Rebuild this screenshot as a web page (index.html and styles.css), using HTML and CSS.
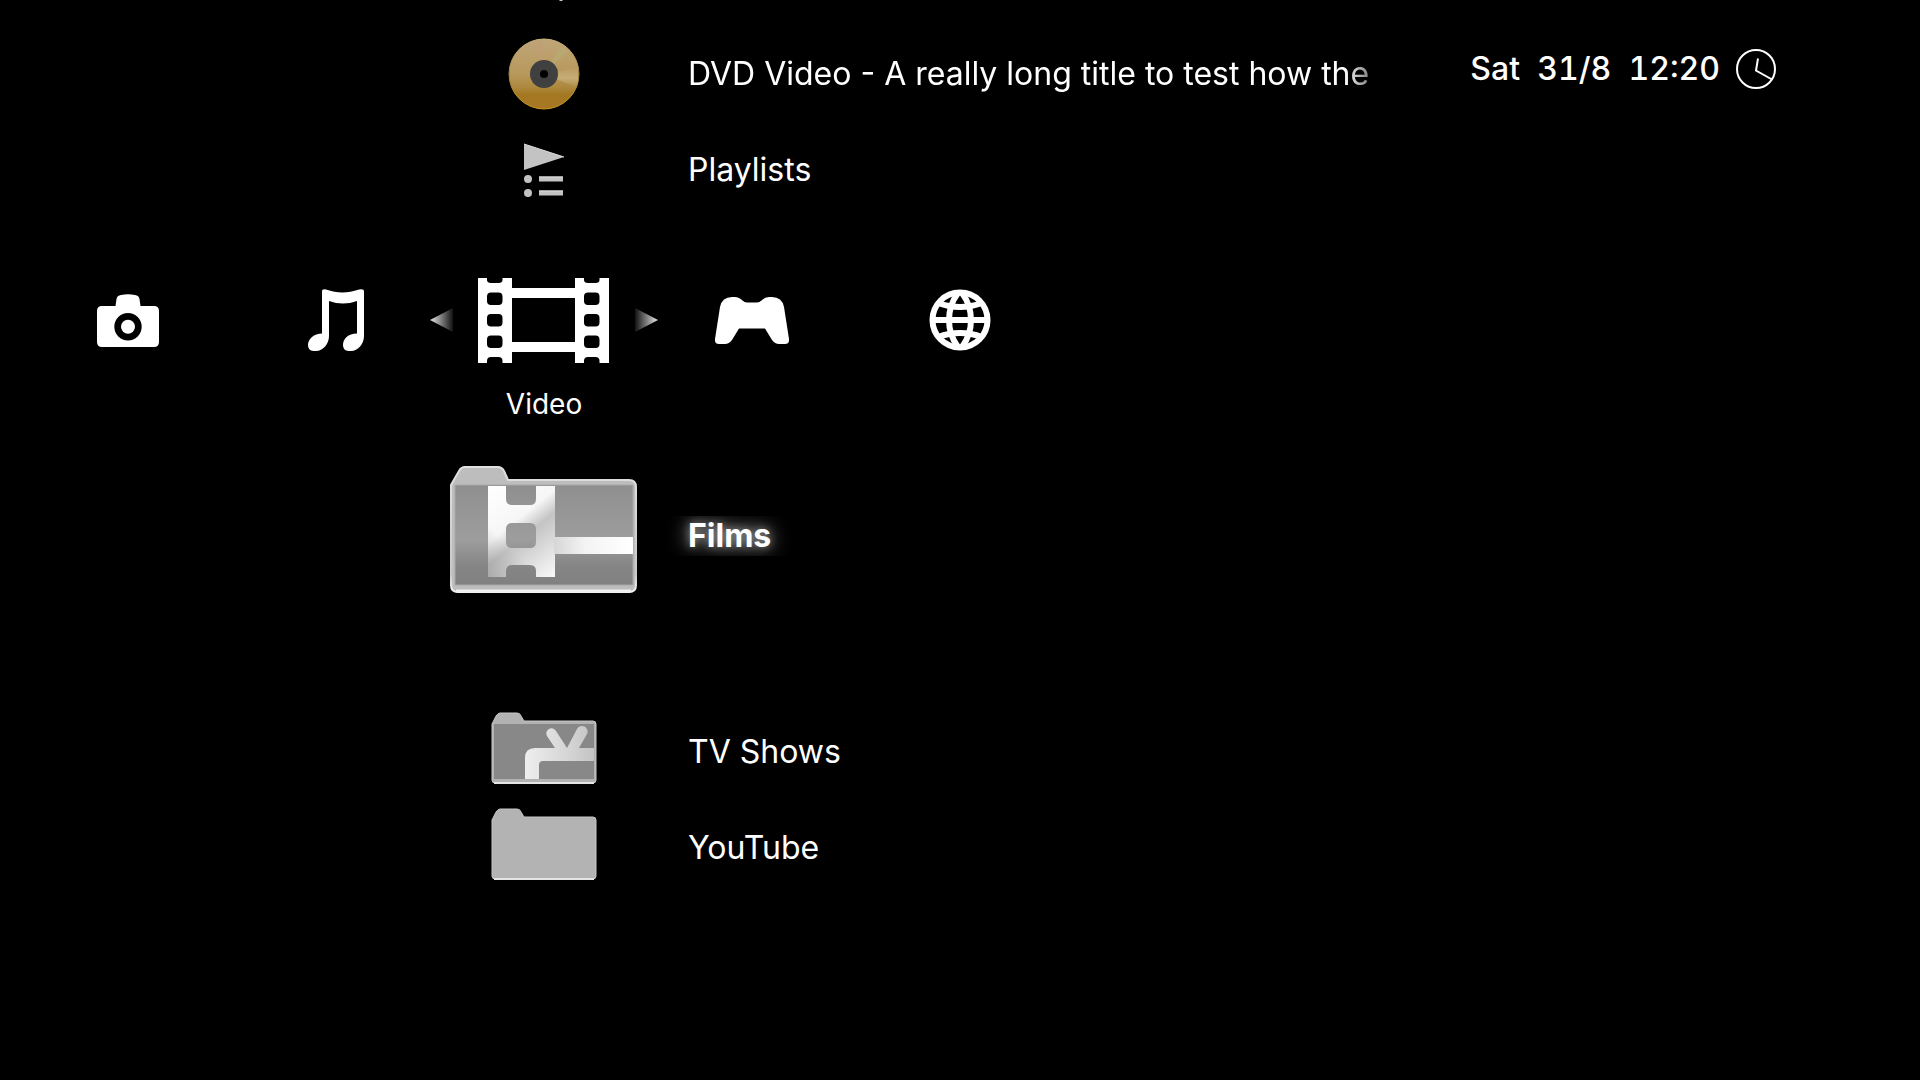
FILE: index.html
```html
<!DOCTYPE html>
<html lang="en">
<head>
<meta charset="utf-8">
<title>Media menu</title>
<link rel="stylesheet" href="styles.css">
</head>
<body>
<main class="menu">
  <div class="top">
    <ul class="list">
      <li class="item item-leaving">
        <svg width="96" height="26" viewBox="0 0 96 26" aria-hidden="true"><path d="M63 0h4l-1 1h-2z" fill="#c8c8c8"/></svg>
      </li>
      <li>
        <button class="item" type="button">
          <svg class="icon" width="72" height="72" viewBox="0 0 72 72" aria-hidden="true">
            <defs>
              <linearGradient id="gold" x1="0" y1="0" x2="0" y2="1"><stop offset="0" stop-color="#bfa579"/><stop offset=".5" stop-color="#b8995c"/><stop offset=".68" stop-color="#ad893f"/><stop offset=".8" stop-color="#a37822"/><stop offset="1" stop-color="#a87724"/></linearGradient>
              <linearGradient id="rim" x1="0" y1="0" x2="0" y2="1"><stop offset="0" stop-color="#d0b880"/><stop offset=".5" stop-color="#9c8248"/><stop offset="1" stop-color="#d09a20"/></linearGradient>
              <linearGradient id="shine" x1="0" y1="0" x2="0" y2="1"><stop offset="0" stop-color="#d8c79a" stop-opacity="0"/><stop offset=".5" stop-color="#d8c79a" stop-opacity=".5"/><stop offset="1" stop-color="#d8c79a" stop-opacity="0"/></linearGradient>
            </defs>
            <circle cx="36" cy="36" r="35" fill="url(#gold)" stroke="url(#rim)"/>
            <path d="M36 36L70 30V50Z" fill="url(#shine)"/>
            <path d="M36 36L53 8L60 13Z" fill="#b4b478" opacity=".4"/>
            <path d="M36 36L25 4L34 2Z" fill="#c49a7c" opacity=".3"/>
            <circle cx="36" cy="36" r="14" fill="#404040"/>
            <circle cx="36" cy="36" r="4" fill="#000"/>
          </svg>
          <span class="title title-long">DVD Video - A really long title to test how the</span>
        </button>
      </li>
      <li>
        <button class="item" type="button">
          <svg class="icon" width="42" height="54" viewBox="0 0 42 54" aria-hidden="true">
            <g fill="#c3c3c3"><path d="M1 1L41 14L1 27Z"/><circle cx="5" cy="36" r="4"/><circle cx="5" cy="50" r="4"/><path d="M16 33.500h24v5H16zM16 47.500h24v5H16z"/></g>
            <path d="M1 1L41 14M16 34h24M16 48h24" stroke="#dedede" fill="none"/>
          </svg>
          <span class="title">Playlists</span>
        </button>
      </li>
    </ul>
    <div class="clock">
      <time class="time" datetime="2024-08-31T12:20">Sat&nbsp; 31/8&nbsp; 12:20</time>
      <svg width="40" height="40" viewBox="0 0 40 40" aria-hidden="true"><g fill="none" stroke="#fff" stroke-width="2"><circle cx="20" cy="20" r="19"/><path d="M22 9.500L20 21.500L36 30.500"/></g></svg>
    </div>
  </div>

  <nav class="categories" aria-label="Categories">
    <button class="category" type="button" aria-label="Photo">
      <svg width="62" height="53" viewBox="0 0 62 53" aria-hidden="true"><path fill="#fff" fill-rule="evenodd" d="M18.500 12L19.500 5Q20 1.500 24 1Q31 -.3 38 1Q42 1.500 42.500 5L43.500 12H57Q62 12 62 17V48Q62 53 57 53H5Q0 53 0 48V17Q0 12 5 12ZM31 19A13.700 13.700 0 1 0 31 46.400A13.700 13.700 0 1 0 31 19Z"/><circle cx="31" cy="32.700" r="7" fill="#fff"/></svg>
    </button>
    <button class="category" type="button" aria-label="Music">
      <svg width="56" height="62" viewBox="0 0 56 62" aria-hidden="true"><path fill="#fff" d="M14 2Q14 -.5 18 .4C24 2 29 3.500 34.500 3.500S45 2 51 .4Q56 -.6 56 2.500V47C56 55 50 62 43 62H40.500C37 62 35 59 35 56C35 50 40 44.500 49 44.500V12Q35 17 21 12V47C21 55 15 62 8 62H5.500C2 62 0 59 0 56C0 50 6 44.500 14 44.500Z"/></svg>
    </button>
    <button class="category category-current" type="button" aria-current="true">
      <svg width="24" height="24" viewBox="0 0 24 24" aria-hidden="true"><defs><linearGradient id="arrowL"><stop offset="0" stop-color="#e8e8e8"/><stop offset="1" stop-color="#111"/></linearGradient></defs><path d="M0 12L23 0V24Z" fill="url(#arrowL)"/></svg>
      <svg width="132" height="86" viewBox="0 0 132 86" aria-hidden="true">
        <defs><g id="reel"><path fill="#fff" fill-rule="evenodd" d="M0 1H9V3Q9 6 13 6H20.500Q24.500 6 24.500 3V1H34V86H24.500V84Q24.500 80 20.500 80H13Q9 80 9 84V86H0ZM13 15.500Q9 15.500 9 19.500V24Q9 28 13 28H20.500Q24.500 28 24.500 24V19.500Q24.500 15.500 20.500 15.500ZM13 37Q9 37 9 41V45.500Q9 49.500 13 49.500H20.500Q24.500 49.500 24.500 45.500V41Q24.500 37 20.500 37ZM13 58.500Q9 58.500 9 62.500V67Q9 71 13 71H20.500Q24.500 71 24.500 67V62.500Q24.500 58.500 20.500 58.500Z"/></g></defs>
        <use href="#reel"/><use href="#reel" x="97"/><path fill="#fff" d="M33 11h65v10H33zM33 65h65v10H33z"/>
      </svg>
      <svg width="24" height="24" viewBox="0 0 24 24" aria-hidden="true"><defs><linearGradient id="arrowR"><stop offset="0" stop-color="#111"/><stop offset="1" stop-color="#e8e8e8"/></linearGradient></defs><path d="M24 12L1 0V24Z" fill="url(#arrowR)"/></svg>
      <span class="category-name">Video</span>
    </button>
    <button class="category" type="button" aria-label="Game">
      <svg width="74" height="47" viewBox="0 0 74 47" aria-hidden="true"><path fill="#fff" d="M5 10Q7 0 17 0H20Q24 0 27.500 3.500Q29.500 5.500 32 5.500H42Q44.500 5.500 46.500 3.500Q50 0 54 0H57Q67 0 69 10L74 42Q74.500 47 70 47H64Q60 47 57 43L50 31.500H24L17 43Q14 47 10 47H4Q-.5 47 0 42Z"/></svg>
    </button>
    <button class="category" type="button" aria-label="Network">
      <svg width="62" height="62" viewBox="0 0 62 62" aria-hidden="true"><g fill="none" stroke="#fff" stroke-width="6"><circle cx="31" cy="31" r="27.500"/><path d="M3 31H59M9 14Q31 22 53 14M9 48Q31 40 53 48"/><path d="M29 4C17 20 17 42 29 58M33 4C45 20 45 42 33 58"/></g></svg>
    </button>
  </nav>

  <ul class="list">
    <li>
      <button class="item item-current" type="button" aria-current="true">
        <svg class="icon" width="188" height="142" viewBox="0 0 188 142" aria-hidden="true">
          <defs>
            <linearGradient id="panel" x1="0" y1="0" x2="0" y2="1"><stop offset="0" stop-color="#8f8f8f"/><stop offset=".55" stop-color="#9d9d9d"/><stop offset=".8" stop-color="#868686"/><stop offset="1" stop-color="#808080"/></linearGradient>
            <linearGradient id="strip" gradientUnits="userSpaceOnUse" x1="38" y1="21" x2="107" y2="108"><stop offset="0" stop-color="#fff"/><stop offset=".4" stop-color="#f6f6f6"/><stop offset=".56" stop-color="#c4c4c4"/><stop offset="1" stop-color="#f8f8f8"/></linearGradient>
            <linearGradient id="stripFade" gradientUnits="userSpaceOnUse" x1="64" y1="86" x2="38" y2="112"><stop offset="0" stop-color="#888" stop-opacity="0"/><stop offset="1" stop-color="#888" stop-opacity=".5"/></linearGradient>
            <linearGradient id="band" x1="0" y1="0" x2="1" y2="0"><stop offset="0" stop-color="#d6d6d6"/><stop offset=".4" stop-color="#f4f4f4"/><stop offset="1" stop-color="#fff"/></linearGradient>
            <linearGradient id="edge" x1="0" y1="0" x2="0" y2="1"><stop offset="0" stop-color="#e0e0e0"/><stop offset=".85" stop-color="#c8c8c8"/><stop offset="1" stop-color="#f4f4f4"/></linearGradient>
            <path id="film" d="M38 21H56V34Q56 40 62 40H80Q86 40 86 34V21H105V112H86V106Q86 100 80 100H62Q56 100 56 106V112H38ZM62 58Q56 58 56 64V77Q56 83 62 83H80Q86 83 86 77V64Q86 58 80 58Z" fill-rule="evenodd"/>
          </defs>
          <path d="M1 20L9 6Q11 2 15 2H48Q52 2 54 6L58 15H179Q186 15 186 22V120Q186 127 179 127H8Q1 127 1 120Z" fill="#bdbdbd" stroke="url(#edge)" stroke-width="2"/>
          <path d="M6 126H181" stroke="#f0f0f0" stroke-width="3"/>
          <path d="M5 20H183V120H5Z" fill="url(#panel)" stroke="#a8a8a8"/>
          <use href="#film" fill="url(#strip)"/>
          <use href="#film" fill="url(#stripFade)"/>
          <path d="M104 72H183V89H104Z" fill="url(#band)"/>
        </svg>
        <span class="title">Films</span>
      </button>
    </li>
    <li>
      <button class="item" type="button">
        <svg class="icon" width="106" height="80" viewBox="0 0 106 80" aria-hidden="true">
          <defs>
            <linearGradient id="tv" x1="0" y1="0" x2="1" y2="0"><stop offset="0" stop-color="#eee"/><stop offset=".6" stop-color="#d6d6d6"/><stop offset="1" stop-color="#c4c4c4"/></linearGradient>
          </defs>
          <path d="M1 12L5 4Q7 1 9 1H26Q29 1 30 4L33 9H102Q105 9 105 12V68Q105 71 102 71H4Q1 71 1 68Z" fill="#b2b2b2" stroke="#c6c6c6"/>
          <path d="M3 71H103" stroke="#e4e4e4" stroke-width="2"/>
          <path d="M3 12H103V67H3Z" fill="#888"/>
          <path d="M34 67V46Q34 36 44 36H64L56 24A5 5 0 0 1 65 19L76 36L86 17A5 5 0 0 1 96 22L88 36H103V49H52Q48 49 48 53V67Z" fill="url(#tv)"/>
        </svg>
        <span class="title">TV Shows</span>
      </button>
    </li>
    <li>
      <button class="item" type="button">
        <svg class="icon" width="106" height="80" viewBox="0 0 106 80" aria-hidden="true">
          <path d="M1 12L5 4Q7 1 9 1H26Q29 1 30 4L33 9H102Q105 9 105 12V68Q105 71 102 71H4Q1 71 1 68Z" fill="#b3b3b3" stroke="#c6c6c6"/>
          <path d="M3 71H103" stroke="#e4e4e4" stroke-width="2"/>
        </svg>
        <span class="title">YouTube</span>
      </button>
    </li>
  </ul>
</main>
</body>
</html>
```
FILE: styles.css
```css
* {
  box-sizing: border-box;
}

body {
  margin: 0;
  background: #000;
  color: #fff;
  font-family: Inter, sans-serif;
  font-size: 32px;
  line-height: 40px;
}

button {
  padding: 0;
  border: 0;
  background: none;
  color: inherit;
  font: inherit;
  text-align: left;
  cursor: pointer;
}

svg {
  display: block;
  flex: none;
}

.menu {
  min-height: 100vh;
}

.top {
  display: flex;
  justify-content: space-between;
  align-items: flex-start;
}

.list {
  margin: 0;
  padding: 0 0 0 448px;
  list-style: none;
}

.item {
  display: grid;
  grid-template-columns: 192px auto;
  column-gap: 48px;
  align-items: center;
  justify-items: start;
  height: 96px;
}

.item-leaving {
  height: 26px;
}

.item > svg {
  justify-self: center;
}

.item-current {
  height: 176px;
  margin-bottom: 80px;
}

.title {
  font-weight: 425;
  white-space: nowrap;
}

.title-long {
  mask-image: linear-gradient(to left, rgb(0 0 0 / 50%), #000 24px);
}

.item-current .title {
  font-weight: 700;
  text-shadow: 0 0 8px rgb(255 255 255 / 40%), 0 0 20px rgb(255 255 255 / 80%);
  clip-path: inset(0 -24px);
}

.clock {
  display: flex;
  align-items: center;
  gap: 16px;
  padding: 49px 144px 0 0;
}

.time {
  font-weight: 500;
  font-variant-numeric: tabular-nums;
  white-space: nowrap;
}

.categories {
  display: grid;
  grid-template-columns: repeat(5, 208px);
  align-items: start;
  height: 230px;
  padding: 38px 0 0 24px;
}

.category {
  display: flex;
  align-items: center;
  justify-content: center;
  height: 128px;
}

.category-current {
  display: grid;
  grid-template: 128px 40px / auto auto auto;
  gap: 0 24px;
  height: auto;
  margin: 0 -16px;
}

.category-name {
  grid-column: 1 / -1;
  font-size: 28px;
  line-height: 40px;
  text-align: center;
}
```
